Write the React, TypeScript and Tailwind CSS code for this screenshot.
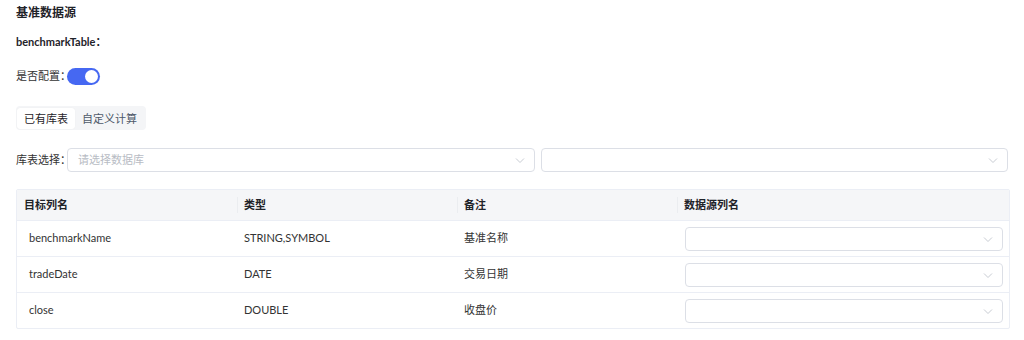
import { useState } from 'react'

const rows = [
  { name: 'benchmarkName', type: 'STRING,SYMBOL', note: '基准名称' },
  { name: 'tradeDate', type: 'DATE', note: '交易日期' },
  { name: 'close', type: 'DOUBLE', note: '收盘价' },
]

function Chevron() {
  return (
    <svg width="12" height="12" viewBox="0 0 12 12" className="shrink-0">
      <path d="M2 4.5 L6 8.5 L10 4.5" fill="none" stroke="#c8ccd3" strokeWidth="1" />
    </svg>
  )
}

function Select({ placeholder, className }: { placeholder?: string; className?: string }) {
  return (
    <div
      className={`flex h-[24px] items-center justify-between rounded-[4px] border border-[#dcdfe6] bg-white pl-[10px] pr-[8px] ${className ?? ''}`}
    >
      <span className="text-[11px] text-[#b8bcc4]">{placeholder}</span>
      <Chevron />
    </div>
  )
}

export default function App() {
  const [enabled, setEnabled] = useState(true)
  const [tab, setTab] = useState(0)

  return (
    <div
      className="h-[340px] w-[1024px] bg-white px-4 pt-[3px] text-[#1f2329]"
      style={{ fontFamily: 'Lato, "Noto Sans CJK SC", sans-serif' }}
    >
      {/* 标题 */}
      <div className="text-[12px] font-bold leading-[20px]">基准数据源</div>
      <div className="mt-[9px] text-[11px] font-bold leading-[20px]">benchmarkTable：</div>

      {/* 是否配置 */}
      <div className="mt-[14px] flex h-[20px] items-center">
        <span className="w-[51px] whitespace-nowrap text-[11px] text-[#333]">是否配置：</span>
        <button
          onClick={() => setEnabled(v => !v)}
          className={`relative h-[17px] w-[33px] rounded-full ${enabled ? 'bg-[#4668f2]' : 'bg-[#c9cdd4]'}`}
        >
          <span
            className={`absolute top-[2px] h-[13px] w-[13px] rounded-full bg-white ${enabled ? 'left-[18px]' : 'left-[2px]'}`}
          />
        </button>
      </div>

      {/* 标签页 */}
      <div className="mt-[20px] inline-flex h-[24px] items-center rounded-[4px] bg-[#f4f5f7] p-[2px] pl-[1px]">
        {['已有库表', '自定义计算'].map((t, i) => (
          <button
            key={t}
            onClick={() => setTab(i)}
            className={`h-[21px] rounded-[3px] px-[7px] text-[11px] leading-[21px] ${
              tab === i ? 'bg-white text-[#1f2329] shadow-[0_0_1px_rgba(0,0,0,0.08)]' : 'text-[#4e5969]'
            }`}
          >
            {t}
          </button>
        ))}
      </div>

      {/* 库表选择 */}
      <div className="mt-[18px] flex items-center">
        <span className="w-[51px] whitespace-nowrap text-[11px] text-[#333]">库表选择：</span>
        <Select placeholder="请选择数据库" className="w-[469px]" />
        <Select className="ml-[6px] w-[468px]" />
      </div>

      {/* 表格 */}
      <div className="mt-[17px] w-[994px] overflow-hidden rounded-[2px] border border-[#ebeef5]">
        <div className="grid h-[30px] grid-cols-[220px_220px_220px_1fr] items-center bg-[#f5f6f8] text-[11px] font-bold">
          {['目标列名', '类型', '备注', '数据源列名'].map((h, i) => (
            <div key={h} className="relative flex h-full items-center pl-[7px]">
              {i > 0 && <span className="absolute left-0 top-[7px] h-[16px] w-px bg-[#ebedf0]" />}
              {h}
            </div>
          ))}
        </div>
        {rows.map(r => (
          <div
            key={r.name}
            className="grid h-[36px] grid-cols-[220px_220px_220px_1fr] items-center border-t border-[#ebeef5] text-[11px] text-[#333]"
          >
            <div className="pl-[12px]">{r.name}</div>
            <div className="pl-[7px]">{r.type}</div>
            <div className="pl-[7px]">{r.note}</div>
            <div className="pl-[8px] pr-[6px]">
              <Select />
            </div>
          </div>
        ))}
      </div>
    </div>
  )
}
